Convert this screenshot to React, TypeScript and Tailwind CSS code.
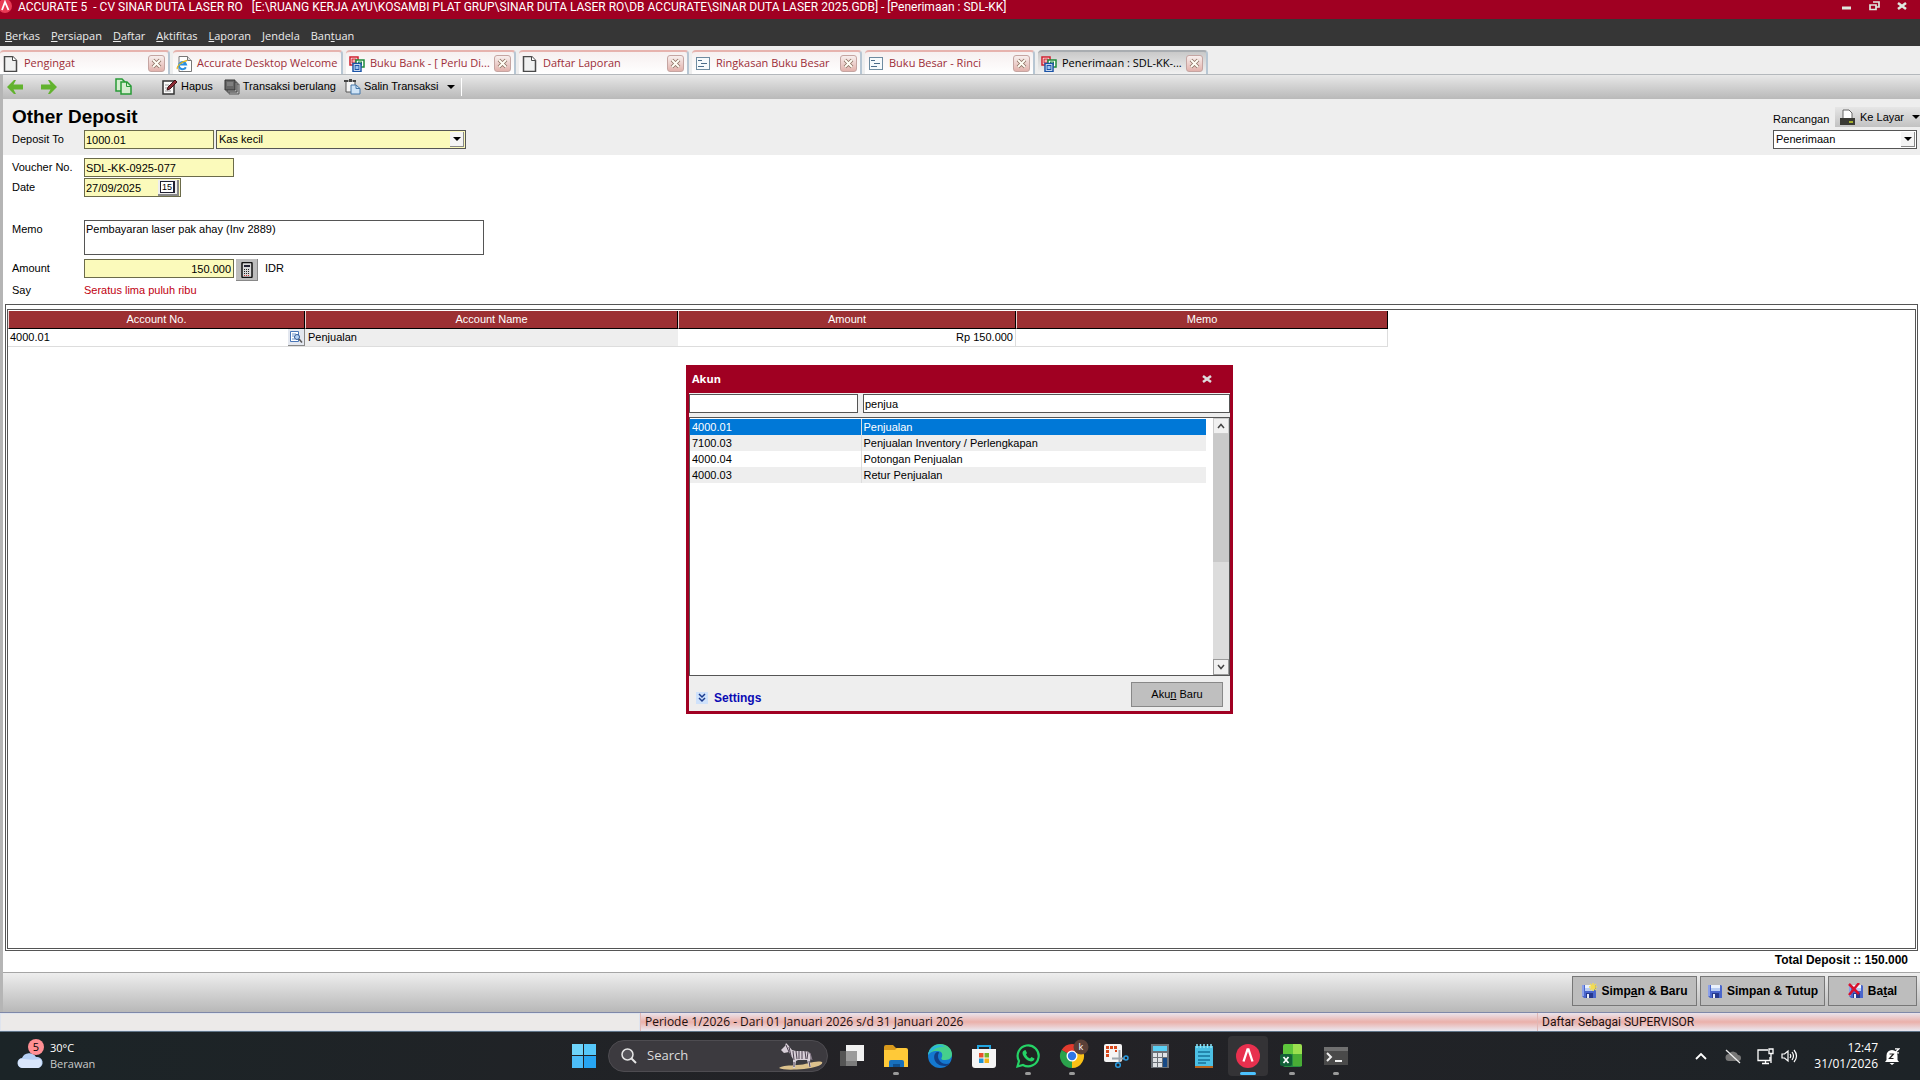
import type { ReactNode } from "react";

const tabs = [
  { title: "Pengingat", icon: "page", closable: true },
  { title: "Accurate Desktop Welcome", icon: "web", closable: false },
  { title: "Buku Bank - [ Perlu Di...", icon: "cards", closable: true },
  { title: "Daftar Laporan", icon: "page", closable: true },
  { title: "Ringkasan Buku Besar", icon: "report", closable: true },
  { title: "Buku Besar - Rinci", icon: "report", closable: true },
  { title: "Penerimaan : SDL-KK-...", icon: "cards", closable: true, active: true },
];

const menus = [
  ["", "B", "erkas"],
  ["", "P", "ersiapan"],
  ["", "D", "aftar"],
  ["", "A", "ktifitas"],
  ["", "L", "aporan"],
  ["", "J", "endela"],
  ["Ban", "t", "uan"],
];

const accounts = [
  { no: "4000.01", name: "Penjualan", selected: true },
  { no: "7100.03", name: "Penjualan Inventory / Perlengkapan" },
  { no: "4000.04", name: "Potongan Penjualan" },
  { no: "4000.03", name: "Retur Penjualan" },
];

function TabIcon({ name }: { name: string }) {
  if (name === "web") {
    return (
      <svg width="16" height="16" viewBox="0 0 16 16" className="shrink-0">
        <path d="M3 .5h8.500l4 4v11H3z" fill="#fff" stroke="#777" />
        <path d="M11.500.5v4h4" fill="#ddd" stroke="#777" />
        <path d="M9.800 11.200A3.600 3.600 0 1 1 10 8.500H4" fill="none" stroke="#2b8fe0" strokeWidth="2" />
        <path d="M1.500 13C0 11 5 5.500 11 4.500" fill="none" stroke="#e3b520" strokeWidth="1.300" />
      </svg>
    );
  }
  if (name === "cards") {
    return (
      <svg width="16" height="16" viewBox="0 0 16 16" className="shrink-0">
        <rect x="1" y="1" width="8" height="8" fill="#fff" stroke="#d01f2d" strokeWidth="1.500" />
        <rect x="3" y="3" width="4" height="4" fill="#f6b0b4" stroke="#d01f2d" />
        <rect x="7" y="4" width="8" height="7" fill="#fff" stroke="#1c8a3a" strokeWidth="1.500" />
        <rect x="9.500" y="6" width="3" height="3" fill="#b4e2be" stroke="#1c8a3a" />
        <rect x="4" y="7.500" width="8" height="8" fill="#fff" stroke="#1b54a8" strokeWidth="1.500" />
        <rect x="6" y="9.500" width="4" height="4" fill="#9cc4f2" stroke="#1b54a8" />
      </svg>
    );
  }
  if (name === "report") {
    return (
      <svg width="16" height="16" viewBox="0 0 16 16" className="shrink-0">
        <rect x="1.500" y="1.500" width="13" height="12" fill="#f6fafc" stroke="#6d8ba0" />
        <path d="M3 4.500h4M6 7.500h6M3 10.500h6" stroke="#4b6c8a" />
      </svg>
    );
  }
  return (
    <svg width="16" height="16" viewBox="0 0 16 16" className="shrink-0">
      <path d="M1.500.5h8l4 4v11h-12z" fill="#f1f1f1" stroke="#4a4a4a" strokeWidth="1.500" />
      <path d="M9.500.5v4h4" fill="#fff" stroke="#4a4a4a" />
    </svg>
  );
}

function CloseMark() {
  return (
    <svg width="11" height="11" viewBox="0 0 11 11">
      <path d="M2 2l7 7M9 2l-7 7" stroke="#8c7264" strokeWidth="3.600" />
      <path d="M2 2l7 7M9 2l-7 7" stroke="#fffdf4" strokeWidth="2" />
    </svg>
  );
}

function Caret() {
  return (
    <svg width="8" height="4" viewBox="0 0 8 4" className="shrink-0">
      <path d="M0 0h8L4 4z" fill="#000" />
    </svg>
  );
}

function DropDown({ id, value, className }: { id: string; value: string; className: string }) {
  return (
    <div className={`relative flex h-[19px] items-center border border-[#555] ${className}`}>
      <select id={id} defaultValue={value} className="h-full w-full appearance-none bg-transparent pl-0.5 text-[11px] leading-[15px] outline-none">
        <option>{value}</option>
      </select>
      <span className="pointer-events-none absolute inset-y-px right-px flex w-3.5 items-center justify-center border-r border-b border-[#888] bg-[#f4f4f4]">
        <Caret />
      </span>
    </div>
  );
}

function Floppy({ kind }: { kind: "new" | "save" | "cancel" }) {
  return (
    <svg width="16" height="16" viewBox="0 0 16 16" className="shrink-0">
      <path d="M1 2h13l1 1v12H3l-2-2z" fill="#4a66cc" />
      <path d="M1 2h2v11H1z" fill="#8ba0ea" />
      <path d="M4 2h9v6H4z" fill="#eaf1fd" />
      <path d="M4 5h9v3H4z" fill="#b9cdf3" />
      <path d="M5 10h7v5H5z" fill="#26398e" />
      <path d="M6 11h2v4H6z" fill="#e8eefb" />
      {kind === "new" && <path d="M12 0v8M8 4h8M9 1l6 6M15 1L9 7" stroke="#f3dc50" strokeWidth="1.500" />}
      {kind === "cancel" && <path d="M1 1l10 10M11 0L1 12" stroke="#d8102c" strokeWidth="2.500" />}
    </svg>
  );
}

function TitleBar() {
  return (
    <header className="flex h-[19px] items-start overflow-hidden bg-[#a00022] font-['Roboto',sans-serif] text-[12px] leading-[14px] text-white">
      <svg width="12" height="14" viewBox="0 0 12 14" className="mr-1.5 shrink-0">
        <circle cx="5" cy="6" r="7" fill="#e93a55" />
        <path d="M2 10L5 2l3.500 8" fill="none" stroke="#fff" strokeWidth="1.800" />
      </svg>
      <h1 className="flex-1 whitespace-pre">
        {"ACCURATE 5  - CV SINAR DUTA LASER RO   [E:\\RUANG KERJA AYU\\KOSAMBI PLAT GRUP\\SINAR DUTA LASER RO\\DB ACCURATE\\SINAR DUTA LASER 2025.GDB] - [Penerimaan : SDL-KK]"}
      </h1>
      <div className="flex gap-4 pr-3">
        <button aria-label="Minimize">
          <svg width="12" height="12" viewBox="0 0 12 12">
            <path d="M2 6.500h9v3H2z" fill="#dfe8df" />
          </svg>
        </button>
        <button aria-label="Restore">
          <svg width="12" height="12" viewBox="0 0 12 12">
            <path d="M5 2h6v5H8.500M2 5h6v4.500H2z" fill="none" stroke="#dfe8df" strokeWidth="1.700" />
          </svg>
        </button>
        <button aria-label="Close">
          <svg width="12" height="12" viewBox="0 0 12 12">
            <path d="M2 3l8 6M10 3L2 9" stroke="#dfe8df" strokeWidth="2.500" />
          </svg>
        </button>
      </div>
    </header>
  );
}

function MenuBar() {
  return (
    <nav className="flex h-[27px] items-center gap-[11px] bg-[#363636] px-[5px] pt-[7px] text-[11px] text-[#ececec]">
      {menus.map(([before, key, after]) => (
        <button key={before + key}>
          {before}
          <u>{key}</u>
          {after}
        </button>
      ))}
    </nav>
  );
}

function TabBar() {
  return (
    <div className="flex h-[29px] items-end gap-[3px] border-b border-[#b4b8bc] bg-[#eee]">
      {tabs.map((tab) => (
        <div
          key={tab.title}
          className={`flex h-6 w-[170px] items-center rounded-t-[4px] border-t-2 border-r-2 px-[3px] pt-px text-[11px] ${
            tab.active
              ? "border-t-[#a9adb1] border-r-[#b7c6d3] bg-linear-to-b from-[#c9c9c9] to-[#f2f2f2] text-black"
              : "border-t-[#e6b3ae] border-r-[#b7c6d3] bg-linear-to-b from-[#f6f0f0] to-white text-[#9c2e38]"
          }`}
        >
          <TabIcon name={tab.icon} />
          <span className="ml-[5px] flex-1 whitespace-nowrap">{tab.title}</span>
          {tab.closable && (
            <button
              aria-label={`Tutup ${tab.title}`}
              className="flex h-[17px] w-[17px] shrink-0 items-center justify-center rounded-[3px] border border-[#c5a5a2] bg-linear-to-b from-[#f7efee] to-[#e2b2ac]"
            >
              <CloseMark />
            </button>
          )}
        </div>
      ))}
    </div>
  );
}

function ToolBar() {
  return (
    <div className="flex h-6 items-center bg-linear-to-b from-[#e8e8e8] to-[#b9b9b9] pb-px pl-1 text-[11px]">
      <button aria-label="Sebelumnya">
        <svg width="16" height="14" viewBox="0 0 16 14">
          <path d="M0 7l7-7h2L6.500 4.500H16v5H6.500L9 14H7z" fill="#62b32e" />
        </svg>
      </button>
      <button aria-label="Berikutnya" className="ml-[18px]">
        <svg width="16" height="14" viewBox="0 0 16 14">
          <path d="M16 7L9 0H7l2.500 4.500H0v5h9.500L7 14h2z" fill="#62b32e" />
        </svg>
      </button>
      <button aria-label="Salin" className="ml-[58px]">
        <svg width="17" height="17" viewBox="0 0 17 17">
          <path d="M1 1h6l3 3v9H1z" fill="#d5edcf" stroke="#279a36" strokeWidth="1.500" />
          <path d="M6 4h6l4 4v8H6z" fill="#d5edcf" stroke="#279a36" strokeWidth="1.500" />
          <path d="M11.500 4v4.500H16" fill="none" stroke="#279a36" />
        </svg>
      </button>
      <button className="ml-[30px] flex items-center gap-[3px]">
        <svg width="16" height="16" viewBox="0 0 16 16">
          <path d="M1 2h11v13H1z" fill="#fafafa" stroke="#333" strokeWidth="1.500" />
          <path d="M3 6h4M3 9h3M3 12h6" stroke="#999" />
          <path d="M5 11l1-3 7-7 2 2-7 7z" fill="#8d2a34" stroke="#3c1418" />
        </svg>
        Hapus
      </button>
      <button className="ml-[11px] flex items-center gap-[3px]">
        <svg width="16" height="16" viewBox="0 0 16 16">
          <path d="M5 5h10v10H5z" fill="#bbb" stroke="#555" />
          <path d="M3 3h10v10H3z" fill="#aaa" stroke="#444" />
          <path d="M1 1h10v10H1z" fill="#666" stroke="#333" />
          <path d="M3 4h6M3 6h6" stroke="#999" />
        </svg>
        Transaksi berulang
      </button>
      <button className="ml-2 flex items-center gap-[3px]">
        <svg width="17" height="16" viewBox="0 0 17 16">
          <path d="M2 2h9v11H2z" fill="#f5f5f5" stroke="#555" />
          <path d="M0 1h4v2H0zM5 0h3v3H5zM9 1h3v2H9z" fill="#444" />
          <path d="M7 6h5l4 3.500V15H7z" fill="#cfe4f7" stroke="#4477a8" />
          <path d="M12 6v3.500h4" fill="none" stroke="#4477a8" />
        </svg>
        Salin Transaksi
      </button>
      <button aria-label="Pilihan salin" className="ml-2 pr-1.5">
        <Caret />
      </button>
      <span className="h-[18px] border-l border-white" />
    </div>
  );
}

function Row({ label, htmlFor, className, children }: { label: string; htmlFor: string; className: string; children: ReactNode }) {
  return (
    <div className={`flex pl-[9px] ${className}`}>
      <label htmlFor={htmlFor} className="w-[72px] shrink-0 leading-[18px]">
        {label}
      </label>
      {children}
    </div>
  );
}

function DepositHead() {
  return (
    <div className="flex h-14 justify-between bg-[#eee]">
      <div>
        <h2 className="pt-[5px] pb-px pl-[9px] text-[19px] leading-[25px] font-bold">Other Deposit</h2>
        <Row label="Deposit To" htmlFor="deposit-no" className="">
          <input id="deposit-no" defaultValue="1000.01" className="h-[19px] w-[130px] border border-[#6b6b4a] bg-[#fbfabb] pl-px" />
          <DropDown id="deposit-name" value="Kas kecil" className="ml-0.5 w-[250px] bg-[#fbfabb]" />
        </Row>
      </div>
      <div className="w-[147px] pt-2">
        <div className="flex h-[23px] justify-between">
          <label htmlFor="design" className="leading-6">
            Rancangan
          </label>
          <button className="flex h-5 w-[85px] items-center gap-1 bg-linear-to-b from-[#e6e6e6] to-[#c2c2c2] pl-1 text-[11px]">
            <svg width="17" height="17" viewBox="0 0 17 17">
              <path d="M4 9V1h6l3 3v5" fill="#fff" stroke="#666" />
              <path d="M1 9h15v7H1z" fill="#3a3a35" />
              <path d="M10 12h4v2h-4z" fill="#a5b02e" />
            </svg>
            <span className="flex-1 text-left whitespace-nowrap">Ke Layar</span>
            <Caret />
          </button>
        </div>
        <DropDown id="design" value="Penerimaan" className="w-36 bg-white" />
      </div>
    </div>
  );
}

function DepositForm() {
  return (
    <div className="pt-[3px]">
      <Row label="Voucher No." htmlFor="voucher" className="h-5">
        <input id="voucher" defaultValue="SDL-KK-0925-077" className="h-[19px] w-[150px] border border-[#6b6b4a] bg-[#fbfabb] pl-px" />
      </Row>
      <Row label="Date" htmlFor="date" className="h-[42px]">
        <div className="flex h-[19px] w-[97px] items-center border border-[#6b6b4a] bg-[#fbfabb] pr-px">
          <input id="date" defaultValue="27/09/2025" className="h-full min-w-0 flex-1 bg-transparent pl-px outline-none" />
          <button
            aria-label="Pilih tanggal"
            className="flex h-4 w-[21px] items-center justify-center border-r-2 border-b-2 border-[#888] bg-[#eee]"
          >
            <span className="border border-r-2 border-[#223] bg-white px-px text-[9px] leading-[10px]">15</span>
          </button>
        </div>
      </Row>
      <Row label="Memo" htmlFor="memo" className="h-[39px]">
        <textarea
          id="memo"
          defaultValue="Pembayaran laser pak ahay (Inv 2889)"
          className="h-[35px] w-[400px] resize-none border border-[#555] bg-white py-px pl-px leading-[15px]"
        />
      </Row>
      <Row label="Amount" htmlFor="amount" className="h-[22px]">
        <input id="amount" defaultValue="150.000" className="h-[19px] w-[150px] border border-[#6b6b4a] bg-[#fbfabb] pr-0.5 text-right" />
        <button aria-label="Kalkulator" className="ml-0.5 flex h-[22px] w-[22px] items-center justify-center border-r border-b border-[#888] bg-[#bdbdbd]">
          <svg width="12" height="16" viewBox="0 0 12 16">
            <rect x="1" y=".5" width="10" height="15" rx="1" fill="#d8d8d8" stroke="#111" strokeWidth="1.500" />
            <path d="M3 3h6v2H3z" fill="#223" />
            <path d="M3 7.500h6M3 9.500h6M3 11.500h6" stroke="#222" strokeDasharray="1 1" />
            <path d="M3 13.500h6" stroke="#c33" strokeDasharray="1 1" />
          </svg>
        </button>
        <span className="ml-[7px] leading-[18px]">IDR</span>
      </Row>
      <div className="flex h-5 pl-[9px] leading-[18px]">
        <span className="w-[72px]">Say</span>
        <output className="text-[#c00010]">Seratus lima puluh ribu</output>
      </div>
    </div>
  );
}

function DetailGrid() {
  const head = "border-r border-b border-l border-r-black border-b-black border-l-[#e8d0d0] bg-[#9c3033] p-0 font-normal text-white";
  return (
    <div className="mx-[2px] flex flex-1 flex-col border border-[#555] p-px pt-1">
      <div className="flex-1 border border-[#555] pt-px">
        <table className="w-[1380px] table-fixed border-separate border-spacing-0 leading-[15px]">
          <colgroup>
            <col className="w-[297px]" />
            <col className="w-[373px]" />
            <col className="w-[338px]" />
            <col className="w-[372px]" />
          </colgroup>
          <thead>
            <tr className="h-[18px]">
              <th className={head}>Account No.</th>
              <th className={head}>Account Name</th>
              <th className={head}>Amount</th>
              <th className={head}>Memo</th>
            </tr>
          </thead>
          <tbody>
            <tr className="h-[18px]">
              <td className="border-b border-[#ddd] p-0">
                <div className="flex items-center justify-between pl-0.5">
                  4000.01
                  <button aria-label="Cari akun" className="flex h-[17px] w-[17px] items-center justify-center border-r border-b border-[#888] bg-[#e4e8f0]">
                    <svg width="14" height="14" viewBox="0 0 14 14">
                      <path d="M1.500 1.500h8v10h-8z" fill="#fff" stroke="#4a77b8" />
                      <path d="M3 4h4M3 6h2M3 9h3" stroke="#6b93cc" />
                      <circle cx="8" cy="7" r="2.500" fill="#b8d4f4" stroke="#2c5595" />
                      <path d="M10 9l3 3.500" stroke="#555" strokeWidth="1.500" />
                    </svg>
                  </button>
                </div>
              </td>
              <td className="border-b border-[#ddd] bg-[#eee] p-0 pl-[3px]">Penjualan</td>
              <td className="border-r border-b border-[#ddd] p-0 pr-0.5 text-right">Rp 150.000</td>
              <td className="border-r border-b border-[#ddd] p-0" />
            </tr>
          </tbody>
        </table>
      </div>
    </div>
  );
}

function AccountDialog() {
  return (
    <section aria-label="Akun" className="absolute top-[365px] left-[686px] w-[547px] border-[3px] border-t-0 border-[#a00022] bg-[#eee] font-['Liberation_Sans',sans-serif] text-[11px]">
      <div className="flex h-7 items-center justify-between bg-[#a00022] pt-px pr-[17px] pl-[3px] font-['Open_Sans',sans-serif] text-[11px] font-bold text-white">
        <h2>Akun</h2>
        <button aria-label="Tutup">
          <svg width="12" height="10" viewBox="0 0 12 10">
            <path d="M2 1l8 6M10 1L2 7" stroke="#ddd" strokeWidth="2.500" />
          </svg>
        </button>
      </div>
      <div className="flex gap-[5px] pt-px pb-1">
        <input aria-label="No. akun" className="h-[19px] w-[169px] border border-[#555] bg-white" />
        <input aria-label="Nama akun" defaultValue="penjua" className="h-[19px] flex-1 border border-[#555] bg-white pl-px" />
      </div>
      <div className="flex h-[259px] justify-between border border-[#555] bg-white">
        <div className="w-[516px] pt-px">
          <table className="w-full table-fixed border-collapse leading-[15px]">
            <colgroup>
              <col className="w-[171px]" />
              <col />
            </colgroup>
            <tbody>
              {accounts.map((account) => (
                <tr key={account.no} className={`h-4 ${account.selected ? "bg-[#0078d7] text-white" : "even:bg-[#eee]"}`}>
                  <td className="border-r border-[#ddd] p-0 pl-0.5">{account.no}</td>
                  <td className="p-0 pl-0.5">{account.name}</td>
                </tr>
              ))}
            </tbody>
          </table>
        </div>
        <div className="flex w-4 flex-col bg-[#dcdcdc]">
          <button aria-label="Gulir ke atas" className="flex h-4 items-center justify-center border border-[#ccc] bg-[#f0f0f0]">
            <svg width="8" height="6" viewBox="0 0 8 6">
              <path d="M1 5l3-3.500L7 5" fill="none" stroke="#444" strokeWidth="1.500" />
            </svg>
          </button>
          <div className="h-32 bg-[#c9c9c9]" />
          <button aria-label="Gulir ke bawah" className="mt-auto flex h-4 items-center justify-center border border-[#999] bg-[#f0f0f0]">
            <svg width="8" height="6" viewBox="0 0 8 6">
              <path d="M1 1l3 3.500L7 1" fill="none" stroke="#444" strokeWidth="1.500" />
            </svg>
          </button>
        </div>
      </div>
      <div className="flex h-[35px] items-center justify-between pt-px pr-[7px] pl-[7px]">
        <button className="flex items-center gap-1.5 pt-2 text-[12px] font-bold text-[#0a0ab4]">
          <svg width="12" height="12" viewBox="0 0 12 12">
            <path d="M0 0h12v12H0z" fill="#cfe2fb" />
            <path d="M3 2l3 3 3-3M3 6l3 3 3-3" fill="none" stroke="#1b3c90" strokeWidth="1.500" />
          </svg>
          Settings
        </button>
        <button className="h-[25px] w-[92px] border border-[#888] bg-[#bfbfbf] text-[11px]">
          Aku<u>n</u> Baru
        </button>
      </div>
    </section>
  );
}

function FooterBar() {
  const button = "flex h-[30px] items-center justify-center gap-1 border border-[#777] bg-[#bdbdbd] text-[12px] font-bold";
  return (
    <div className="flex h-10 items-start justify-end gap-[3px] border-t border-[#a5a5a5] bg-linear-to-b from-[#eee] to-[#b8b8b8] pt-[3px] pr-[3px]">
      <button className={`${button} w-[125px]`}>
        <Floppy kind="new" />
        <span>
          Simp<u>a</u>n &amp; Baru
        </span>
      </button>
      <button className={`${button} w-[125px]`}>
        <Floppy kind="save" />
        Simpan &amp; Tutup
      </button>
      <button className={`${button} w-[89px]`}>
        <Floppy kind="cancel" />
        <span>
          Ba<u>t</u>al
        </span>
      </button>
    </div>
  );
}

function StatusBar() {
  const panel = "border-l border-[#e0b8b6] bg-linear-to-b from-[#e9e4ec] via-[#eab0aa] to-[#e9e9f2] pl-1";
  return (
    <div className="flex h-5 border-t border-b border-t-[#7f88a8] border-b-[#5f7488] text-[12px] leading-[18px] text-[#1c1010]">
      <div className="w-[640px] border border-[#dfe4ee] bg-[#eceae9]" />
      <div className={`${panel} flex-1`}>Periode 1/2026 - Dari 01 Januari 2026 s/d 31 Januari 2026</div>
      <div className={`${panel} w-[383px] font-['Roboto',sans-serif]`}>Daftar Sebagai SUPERVISOR</div>
    </div>
  );
}

function TaskButton({ label, mark, children }: { label: string; mark?: "open" | "active"; children: ReactNode }) {
  return (
    <button
      aria-label={label}
      className={`relative flex h-10 w-10 items-center justify-center rounded ${mark === "active" ? "bg-[#343336]" : ""}`}
    >
      <svg width="24" height="24" viewBox="0 0 24 24" className="overflow-visible">
        {children}
      </svg>
      {mark === "open" && <span className="absolute bottom-px h-[3px] w-1.5 rounded-full bg-[#9a9a9a]" />}
      {mark === "active" && <span className="absolute bottom-px h-[3px] w-4 rounded-full bg-[#4cc2ff]" />}
    </button>
  );
}

function TaskBar() {
  return (
    <footer className="grid h-12 grid-cols-[1fr_auto_1fr] items-center bg-linear-to-r from-[#1b2427] via-[#242226] to-[#1d2327] text-[12px] text-white">
      <div className="flex items-center gap-1.5 pl-[17px]">
        <div className="relative pb-1">
          <svg width="27" height="30" viewBox="0 0 27 30">
            <path d="M6 29a5 5 0 0 1-1-10 8 8 0 0 1 14-1 5.500 5.500 0 0 1 2 11z" fill="#b5d0f5" />
            <path d="M6 29a5 5 0 0 1-3-9c4-1 10 2 20 0a5.500 5.500 0 0 1-2 9z" fill="#d9e6fb" />
          </svg>
          <span className="absolute top-0 right-0 h-4 w-4 rounded-full bg-[#ff8f94] text-center text-[11px] leading-4 text-black">5</span>
        </div>
        <p className="text-[11px] leading-4">
          30°C
          <br />
          <span className="text-[#c9c9c9]">Berawan</span>
        </p>
      </div>

      <div className="flex items-center gap-1">
        <TaskButton label="Start">
          <path d="M0 0h11v11H0z" fill="#6ed4fb" />
          <path d="M12 0h12v11H12z" fill="#56c8fa" />
          <path d="M0 12h11v12H0z" fill="#4cbdf8" />
          <path d="M12 12h12v12H12z" fill="#27a5f2" />
        </TaskButton>
        <label className="flex h-8 w-[220px] items-center rounded-full border border-[#4e4c51] bg-[#3c3a3f] pr-1 pl-3">
          <svg width="16" height="16" viewBox="0 0 16 16" className="shrink-0">
            <circle cx="6.500" cy="6.500" r="5.500" fill="#56545a" stroke="#e6e6e6" strokeWidth="1.500" />
            <path d="M10.500 10.500L15 15" stroke="#e6e6e6" strokeWidth="2" />
          </svg>
          <input aria-label="Search" placeholder="Search" className="ml-2.5 min-w-0 flex-1 bg-transparent text-[13px] outline-none placeholder:text-[#dcdcdc]" />
          <svg width="44" height="27" viewBox="0 0 44 27" className="shrink-0">
            <path d="M0 25c4-3 10-2 18-3 10 0 18-5 25-3 2 3-8 6-18 7-12 1-21 1-25-1z" fill="#dcc18c" />
            <path d="M2 7l4-4 1-3 2 2 4 5c5 2 12 0 17 2 2 3 2 6 1 9l1 6h-2l-2-7h-9l-2 1-1 7h-2V16l-4-7-5 1z" fill="#d8cfd8" />
            <path d="M7 2l3 7M10 4l2 9M14 8l1 9M17 8l1 8M20 8v8M23 8v8M26 8l1 8M29 9l-1 7M30 18l1 6M15 19v5" stroke="#4c4150" />
            <path d="M31 10l2 7" stroke="#8d8090" />
          </svg>
        </label>
        <TaskButton label="Task view">
          <path d="M6 1h18v16H6z" fill="#f1f1f1" />
          <path d="M0 7h17v15H0z" fill="#8c8c8c" fillOpacity=".85" />
          <path d="M0 7h6v15H0z" fill="#555" />
        </TaskButton>
        <TaskButton label="File Explorer" mark="open">
          <path d="M0 3a2 2 0 0 1 2-2h7l3 3h10v5H0z" fill="#d99a1c" />
          <path d="M0 6h11l2-2h9a2 2 0 0 1 2 2v17H0z" fill="#ffc938" />
          <path d="M5 23v-5a2 2 0 0 1 2-2h11a2 2 0 0 1 2 2v5z" fill="#1770bd" />
          <path d="M9 23v-3h7v3z" fill="#0f4f8d" />
        </TaskButton>
        <TaskButton label="Edge">
          <circle cx="12" cy="12" r="12" fill="#1479d0" />
          <path d="M0 11C1 4 6 0 12 0c8 0 12 6 12 10 0 5-4 6-8 6-3 0-3-2-2-3 1-4-1-6-5-6-5 0-8 2-9 4z" fill="#45cf8c" />
          <path d="M0 11C1 5 6 1 12 1c2 0 4 1 5 2-8-1-13 4-17 8z" fill="#2bb7dd" />
          <path d="M9 8c-5 2-4 14 8 14 2 0 4-1 5-3-5 3-12-1-12-7 0-2 1-3 1-4z" fill="#103f86" />
        </TaskButton>
        <TaskButton label="Microsoft Store">
          <path d="M6 7V2h12v5" fill="none" stroke="#22a5e0" strokeWidth="2" />
          <path d="M0 5h24v16a3 3 0 0 1-3 3H3a3 3 0 0 1-3-3z" fill="#f5f5f5" />
          <path d="M7 9h4.500v4.500H7z" fill="#e8502c" />
          <path d="M12.500 9H17v4.500h-4.500z" fill="#78b52a" />
          <path d="M7 14.500h4.500V19H7z" fill="#2095d8" />
          <path d="M12.500 14.500H17V19h-4.500z" fill="#f5b51c" />
        </TaskButton>
        <TaskButton label="WhatsApp" mark="open">
          <path d="M1.500 22.500L3 17a10.500 10.500 0 1 1 4 4z" fill="#202422" stroke="#25d366" strokeWidth="2.200" />
          <path d="M8 6.500l1.500-.5 1.500 3-1 1.500c1 2 2 3 4 4l1.500-1.500 3 1.500c0 2-2 3-3.500 3C11 17 6.500 12 6.500 9c0-1 .7-2 1.500-2.500z" fill="#25d366" />
        </TaskButton>
        <TaskButton label="Chrome" mark="open">
          <path d="M12 12L1.600 6A12 12 0 0 1 22.400 6z" fill="#e33b2e" />
          <path d="M12 12l10.400-6A12 12 0 0 1 12 24z" fill="#fbc116" />
          <path d="M12 12v12A12 12 0 0 1 1.600 6z" fill="#2ba24c" />
          <circle cx="12" cy="12" r="5.500" fill="#fff" />
          <circle cx="12" cy="12" r="4.200" fill="#2f76e8" />
          <circle cx="21" cy="3" r="7.500" fill="#5b4038" />
          <text x="18.500" y="6" fontSize="9" fill="#fff">k</text>
        </TaskButton>
        <TaskButton label="Snipping Tool">
          <rect width="18" height="18" rx="2" fill="#f5f5f5" />
          <path d="M2 2h3v3H2zM6 2h3v3H6zM10 2h3v3h-3zM2 6h3v3H2zM2 10h3v3H2zM11 6h2v2h-2z" fill="#d8481c" />
          <path d="M15.500 6v12M8 14.500h13" fill="none" stroke="#9ea6ad" strokeWidth="2" />
          <circle cx="14" cy="21" r="2.300" fill="#202226" stroke="#2a9be0" strokeWidth="1.500" />
          <circle cx="22" cy="14" r="2" fill="#202226" stroke="#2a9be0" strokeWidth="1.500" />
        </TaskButton>
        <TaskButton label="Calculator">
          <path d="M3 0h18v24H3z" fill="#6b7177" />
          <path d="M5 2h14v5H5z" fill="#5bd0f5" />
          <path d="M5 9h4v4H5zM10 9h4v4h-4zM15 9h4v4h-4zM5 14h4v4H5zM10 14h4v4h-4zM5 19h4v4H5zM10 19h4v4h-4z" fill="#dfe3e6" />
          <path d="M15 14h4v9h-4z" fill="#174a86" />
        </TaskButton>
        <TaskButton label="Notepad">
          <path d="M3 2h18v20H3z" fill="#4cc0e4" />
          <path d="M3 22h18v2H3z" fill="#b8641c" />
          <path d="M5 0v4M8.500 0v4M12 0v4M15.500 0v4M19 0v4" stroke="#8de3f7" strokeWidth="1.500" />
          <path d="M6 8h12M6 12h12M6 16h12M6 19h8" stroke="#16729a" strokeWidth="1.500" />
        </TaskButton>
        <TaskButton label="Accurate" mark="active">
          <circle cx="12" cy="12" r="12" fill="#e8304e" />
          <path d="M7.500 17.500l4-12h1l4 12" fill="none" stroke="#fff" strokeWidth="2.300" />
        </TaskButton>
        <TaskButton label="Excel" mark="open">
          <path d="M3 2a2 2 0 0 1 2-2h8v12H3z" fill="#5ec63c" />
          <path d="M13 0h7a2 2 0 0 1 2 2v8H13z" fill="#9be04f" />
          <path d="M3 10h19v11a2 2 0 0 1-2 2H5a2 2 0 0 1-2-2z" fill="#278e42" />
          <path d="M13 10h9v12h-9z" fill="#49ad35" />
          <rect y="10" width="12" height="12" rx="2" fill="#126038" />
          <path d="M3.500 13l5 6M8.500 13l-5 6" stroke="#fff" strokeWidth="1.800" />
        </TaskButton>
        <TaskButton label="Terminal" mark="open">
          <path d="M0 3h24v18H0z" fill="#4a4a4a" />
          <path d="M0 3h24v4H0z" fill="#707070" />
          <path d="M3 9l4 4-4 4" fill="none" stroke="#f0f0f0" strokeWidth="2" />
          <path d="M11 17h7" stroke="#f0f0f0" strokeWidth="2" />
        </TaskButton>
      </div>

      <div className="flex items-center justify-end pr-5">
        <button aria-label="Ikon tersembunyi" className="mr-[18px]">
          <svg width="12" height="8" viewBox="0 0 12 8">
            <path d="M1 7l5-5 5 5" fill="none" stroke="#fff" strokeWidth="1.800" />
          </svg>
        </button>
        <svg width="17" height="15" viewBox="0 0 17 15" className="mr-[15px]">
          <path d="M4 12a3.500 3.500 0 0 1 0-7 5 5 0 0 1 9 1 3 3 0 0 1 0 6z" fill="#777" />
          <path d="M1 1l14 13" stroke="#eee" strokeWidth="1.300" />
        </svg>
        <svg width="17" height="17" viewBox="0 0 17 17" className="mr-[7px]">
          <path d="M11 2H1v10.500h12V9M5 15.500h7M8.500 12.500v3" fill="none" stroke="#fff" strokeWidth="1.300" />
          <path d="M12 1h4v4.500h-4zM14 6v9" fill="none" stroke="#fff" strokeWidth="1.300" />
        </svg>
        <svg width="17" height="14" viewBox="0 0 17 14" className="mr-4">
          <path d="M1 5h2.500L7 2v10L3.500 9H1z" fill="none" stroke="#fff" strokeWidth="1.200" />
          <path d="M9 5q1.500 2 0 4M11 3q3 4 0 8M13 1q5 6 0 12" fill="none" stroke="#fff" strokeWidth="1.200" />
        </svg>
        <time className="text-right leading-4">
          12:47
          <br />
          31/01/2026
        </time>
        <svg width="15" height="17" viewBox="0 0 15 17" className="ml-[7px]">
          <path d="M1.500 12V7.500a5.500 5.500 0 0 1 11 0V12l1.500 2H0z" fill="#fff" />
          <path d="M4.500 15h5L7 17z" fill="#fff" />
          <path d="M4.500 6h4l-4 4.500h4" fill="none" stroke="#222" strokeWidth="1.200" />
          <path d="M10 .8h4l-4 4h4" fill="none" stroke="#fff" strokeWidth="1.300" />
        </svg>
      </div>
    </footer>
  );
}

export default function App() {
  return (
    <div className="relative flex min-h-screen flex-col bg-white font-['Open_Sans','Noto_Sans',sans-serif] text-black">
      <TitleBar />
      <MenuBar />
      <TabBar />
      <main className="flex flex-1 flex-col border-l-[3px] border-[#b5b5b5] font-['Liberation_Sans',sans-serif] text-[11px]">
        <ToolBar />
        <DepositHead />
        <DepositForm />
        <div className="flex flex-1 flex-col pt-[3px]">
          <DetailGrid />
        </div>
        <p className="h-[21px] pr-3 text-right text-[12px] leading-[18px] font-bold">Total Deposit :: 150.000</p>
        <FooterBar />
      </main>
      <StatusBar />
      <TaskBar />
      <AccountDialog />
    </div>
  );
}
